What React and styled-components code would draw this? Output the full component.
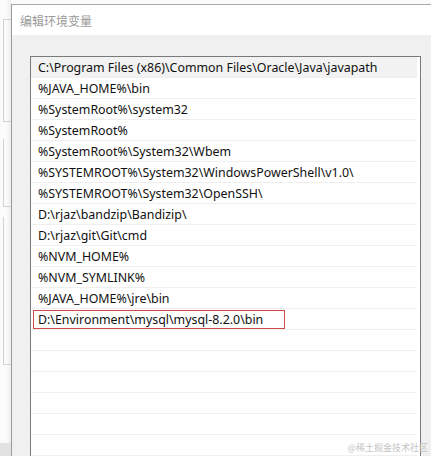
import React from "react";
import styled, { createGlobalStyle } from "styled-components";

const GlobalStyle = createGlobalStyle`
  html, body {
    margin: 0;
    padding: 0;
    background: #f7f7f7;
  }
  body {
    font-family: "Noto Sans", "Noto Sans CJK SC", sans-serif;
  }
`;

const paths = [
  "C:\\Program Files (x86)\\Common Files\\Oracle\\Java\\javapath",
  "%JAVA_HOME%\\bin",
  "%SystemRoot%\\system32",
  "%SystemRoot%",
  "%SystemRoot%\\System32\\Wbem",
  "%SYSTEMROOT%\\System32\\WindowsPowerShell\\v1.0\\",
  "%SYSTEMROOT%\\System32\\OpenSSH\\",
  "D:\\rjaz\\bandzip\\Bandizip\\",
  "D:\\rjaz\\git\\Git\\cmd",
  "%NVM_HOME%",
  "%NVM_SYMLINK%",
  "%JAVA_HOME%\\jre\\bin",
];

const editing = "D:\\Environment\\mysql\\mysql-8.2.0\\bin";

const Page = styled.div`
  position: relative;
  width: 431px;
  height: 456px;
  overflow: hidden;
  display: flex;
  background: #fafafa;
`;

const Backdrop = styled.div`
  width: 11px;
  flex-shrink: 0;
  display: flex;
  flex-direction: column;
  background: linear-gradient(to right, #fbfbfb 60%, #ececec);
`;

const GroupEdge = styled.div`
  margin-top: ${(p) => p.top}px;
  height: ${(p) => p.height}px;
  margin-left: 3px;
  border-left: 1px solid #d2d2d2;
  border-top: ${(p) => (p.open ? "none" : "1px solid #d2d2d2")};
  border-bottom: 1px solid #d2d2d2;
`;

const BackdropFooter = styled.div`
  margin-top: auto;
  height: 13px;
  background: #e2e2e2;
`;

const Dialog = styled.div`
  margin-top: 4px;
  flex: 1;
  display: flex;
  flex-direction: column;
  border-top: 1px solid #a8a8a8;
  border-left: 1px solid #9a9a9a;
  background: #f0f0f0;
`;

const TitleBar = styled.div`
  height: 30px;
  flex-shrink: 0;
  display: flex;
  align-items: center;
  padding-left: 8px;
  background: #ffffff;
  color: #9a9a9a;
  font-family: "Noto Sans CJK SC", sans-serif;
  font-size: 12px;
`;

const Body = styled.div`
  flex: 1;
  padding: 21px 10px 0 18px;
  display: flex;
  flex-direction: column;
`;

const ListBox = styled.div`
  flex: 1;
  display: flex;
  flex-direction: column;
  background: #ffffff;
  border: 1px solid #7a7a7a;
  border-bottom: none;
`;

const Row = styled.div`
  height: 20px;
  flex-shrink: 0;
  display: flex;
  align-items: center;
  margin-right: 3px;
  padding-left: 7px;
  border-bottom: 1px solid #efefef;
  background: ${(p) => (p.selected ? "#f2f2f2" : "transparent")};
  color: #111111;
  font-size: 12.4px;
  white-space: nowrap;
`;

const EditRow = styled.div`
  height: 20px;
  flex-shrink: 0;
  display: flex;
  align-items: center;
  margin-right: 3px;
  border-bottom: 1px solid #efefef;
`;

const EditBox = styled.div`
  margin-left: 2px;
  width: 246px;
  height: 17px;
  padding-left: 4px;
  display: flex;
  align-items: center;
  border: 1px solid #d04a4a;
  color: #111111;
  font-size: 12.4px;
  white-space: nowrap;
`;

const Watermark = styled.div`
  position: absolute;
  right: 3px;
  bottom: 2px;
  color: #c4c4c4;
  font-family: "Noto Sans CJK SC", sans-serif;
  font-size: 9px;
`;

export default function App() {
  return (
    <>
      <GlobalStyle />
      <Page>
        <Backdrop>
          <GroupEdge top={19} height={101} />
          <GroupEdge top={17} height={67} open />
          <GroupEdge top={10} height={147} open />
          <BackdropFooter />
        </Backdrop>
        <Dialog>
          <TitleBar>编辑环境变量</TitleBar>
          <Body>
            <ListBox>
              {paths.map((p, i) => (
                <Row key={i} selected={i === 0}>
                  {p}
                </Row>
              ))}
              <EditRow>
                <EditBox>{editing}</EditBox>
              </EditRow>
              {Array.from({ length: 8 }).map((_, i) => (
                <Row key={"e" + i} />
              ))}
            </ListBox>
          </Body>
        </Dialog>
        <Watermark>@稀土掘金技术社区</Watermark>
      </Page>
    </>
  );
}
